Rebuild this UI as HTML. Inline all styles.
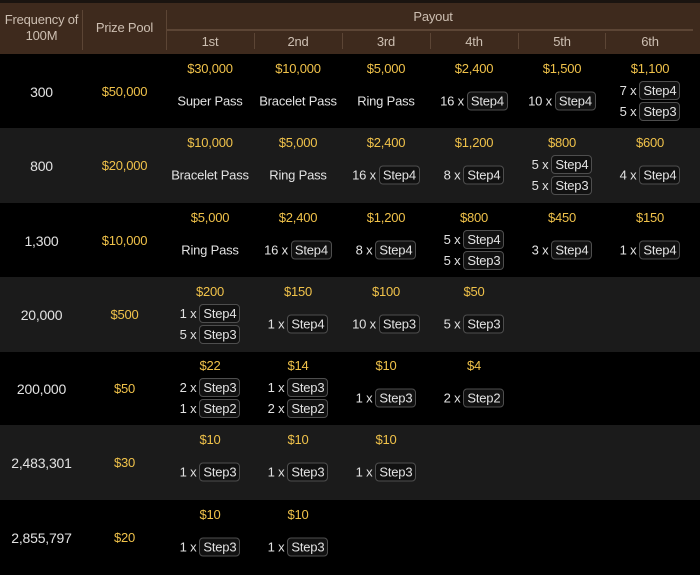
<!DOCTYPE html>
<html><head><meta charset="utf-8"><style>
*{margin:0;padding:0;box-sizing:border-box}
body{width:700px;height:562px;overflow:hidden;background:#000;font-family:"Liberation Sans",Roboto,sans-serif;color:#e2e2e2;position:relative}
.top{position:absolute;left:0;top:0;width:700px;height:4px;background:#1a1410}
.hd{position:absolute;left:0;top:3px;width:700px;height:51px;background:#3e2a1d;color:#cdbfb2;font-size:13px;letter-spacing:-0.2px}
.hd div{position:absolute;text-align:center}
.vl{position:absolute;width:1px;background:#5c4535}
.r{position:absolute;left:0;width:700px;height:75px;letter-spacing:-0.2px}
.g{background:#1b1b1b}
.c0,.c1{position:absolute;top:0;height:100%;width:83px;display:flex;align-items:center;justify-content:center;font-size:14px}
.c0{left:0}.c1{left:83px;color:#f0c24a;font-size:13px}
.c{position:absolute;top:0;width:88px;height:100%;text-align:center;font-size:13px}
.m{position:absolute;left:0;right:0;top:7px;color:#f0c24a;line-height:16px}
.b{position:absolute;left:0;right:0;top:47px;transform:translateY(-50%)}
.l{height:21px;line-height:21px;white-space:nowrap}
.p{display:inline-block;height:19px;line-height:17px;padding:0 3px;border:1px solid #4e4e4e;border-radius:4px;background:#111;margin-left:3px}
.x0{left:166px}.x1{left:254px}.x2{left:342px}.x3{left:430px}.x4{left:518px}.x5{left:606px}
</style></head><body>
<div class="top"></div>
<div class="hd">
<div style="left:0;width:83px;top:9px;line-height:16px">Frequency of<br>100M</div>
<div style="left:83px;width:83px;top:17px">Prize Pool</div>
<div style="left:166px;width:534px;top:6px">Payout</div>
<div style="left:166px;top:31px;width:88px">1st</div>
<div style="left:254px;top:31px;width:88px">2nd</div>
<div style="left:342px;top:31px;width:88px">3rd</div>
<div style="left:430px;top:31px;width:88px">4th</div>
<div style="left:518px;top:31px;width:88px">5th</div>
<div style="left:606px;top:31px;width:88px">6th</div>
<span class="vl" style="left:82px;top:7px;height:40px"></span>
<span class="vl" style="left:166px;top:7px;height:40px"></span>
<span class="vl" style="left:166px;top:26px;height:2px;width:527px"></span>
<span class="vl" style="left:254px;top:30px;height:16px"></span>
<span class="vl" style="left:342px;top:30px;height:16px"></span>
<span class="vl" style="left:430px;top:30px;height:16px"></span>
<span class="vl" style="left:518px;top:30px;height:16px"></span>
<span class="vl" style="left:605px;top:30px;height:16px"></span>
</div>

<div class="r" style="top:54px">
<div class="c0">300</div><div class="c1">$50,000</div>
<div class="c x0"><div class="m">$30,000</div><div class="b"><div class="l">Super Pass</div></div></div>
<div class="c x1"><div class="m">$10,000</div><div class="b"><div class="l">Bracelet Pass</div></div></div>
<div class="c x2"><div class="m">$5,000</div><div class="b"><div class="l">Ring Pass</div></div></div>
<div class="c x3"><div class="m">$2,400</div><div class="b"><div class="l">16 x<span class="p">Step4</span></div></div></div>
<div class="c x4"><div class="m">$1,500</div><div class="b"><div class="l">10 x<span class="p">Step4</span></div></div></div>
<div class="c x5"><div class="m">$1,100</div><div class="b"><div class="l">7 x<span class="p">Step4</span></div><div class="l">5 x<span class="p">Step3</span></div></div></div>
</div>

<div class="r g" style="top:128px">
<div class="c0">800</div><div class="c1">$20,000</div>
<div class="c x0"><div class="m">$10,000</div><div class="b"><div class="l">Bracelet Pass</div></div></div>
<div class="c x1"><div class="m">$5,000</div><div class="b"><div class="l">Ring Pass</div></div></div>
<div class="c x2"><div class="m">$2,400</div><div class="b"><div class="l">16 x<span class="p">Step4</span></div></div></div>
<div class="c x3"><div class="m">$1,200</div><div class="b"><div class="l">8 x<span class="p">Step4</span></div></div></div>
<div class="c x4"><div class="m">$800</div><div class="b"><div class="l">5 x<span class="p">Step4</span></div><div class="l">5 x<span class="p">Step3</span></div></div></div>
<div class="c x5"><div class="m">$600</div><div class="b"><div class="l">4 x<span class="p">Step4</span></div></div></div>
</div>

<div class="r" style="top:203px">
<div class="c0">1,300</div><div class="c1">$10,000</div>
<div class="c x0"><div class="m">$5,000</div><div class="b"><div class="l">Ring Pass</div></div></div>
<div class="c x1"><div class="m">$2,400</div><div class="b"><div class="l">16 x<span class="p">Step4</span></div></div></div>
<div class="c x2"><div class="m">$1,200</div><div class="b"><div class="l">8 x<span class="p">Step4</span></div></div></div>
<div class="c x3"><div class="m">$800</div><div class="b"><div class="l">5 x<span class="p">Step4</span></div><div class="l">5 x<span class="p">Step3</span></div></div></div>
<div class="c x4"><div class="m">$450</div><div class="b"><div class="l">3 x<span class="p">Step4</span></div></div></div>
<div class="c x5"><div class="m">$150</div><div class="b"><div class="l">1 x<span class="p">Step4</span></div></div></div>
</div>

<div class="r g" style="top:277px">
<div class="c0">20,000</div><div class="c1">$500</div>
<div class="c x0"><div class="m">$200</div><div class="b"><div class="l">1 x<span class="p">Step4</span></div><div class="l">5 x<span class="p">Step3</span></div></div></div>
<div class="c x1"><div class="m">$150</div><div class="b"><div class="l">1 x<span class="p">Step4</span></div></div></div>
<div class="c x2"><div class="m">$100</div><div class="b"><div class="l">10 x<span class="p">Step3</span></div></div></div>
<div class="c x3"><div class="m">$50</div><div class="b"><div class="l">5 x<span class="p">Step3</span></div></div></div>
</div>

<div class="r" style="top:351px">
<div class="c0">200,000</div><div class="c1">$50</div>
<div class="c x0"><div class="m">$22</div><div class="b"><div class="l">2 x<span class="p">Step3</span></div><div class="l">1 x<span class="p">Step2</span></div></div></div>
<div class="c x1"><div class="m">$14</div><div class="b"><div class="l">1 x<span class="p">Step3</span></div><div class="l">2 x<span class="p">Step2</span></div></div></div>
<div class="c x2"><div class="m">$10</div><div class="b"><div class="l">1 x<span class="p">Step3</span></div></div></div>
<div class="c x3"><div class="m">$4</div><div class="b"><div class="l">2 x<span class="p">Step2</span></div></div></div>
</div>

<div class="r g" style="top:425px">
<div class="c0">2,483,301</div><div class="c1">$30</div>
<div class="c x0"><div class="m">$10</div><div class="b"><div class="l">1 x<span class="p">Step3</span></div></div></div>
<div class="c x1"><div class="m">$10</div><div class="b"><div class="l">1 x<span class="p">Step3</span></div></div></div>
<div class="c x2"><div class="m">$10</div><div class="b"><div class="l">1 x<span class="p">Step3</span></div></div></div>
</div>

<div class="r" style="top:500px">
<div class="c0">2,855,797</div><div class="c1">$20</div>
<div class="c x0"><div class="m">$10</div><div class="b"><div class="l">1 x<span class="p">Step3</span></div></div></div>
<div class="c x1"><div class="m">$10</div><div class="b"><div class="l">1 x<span class="p">Step3</span></div></div></div>
</div>
</body></html>
